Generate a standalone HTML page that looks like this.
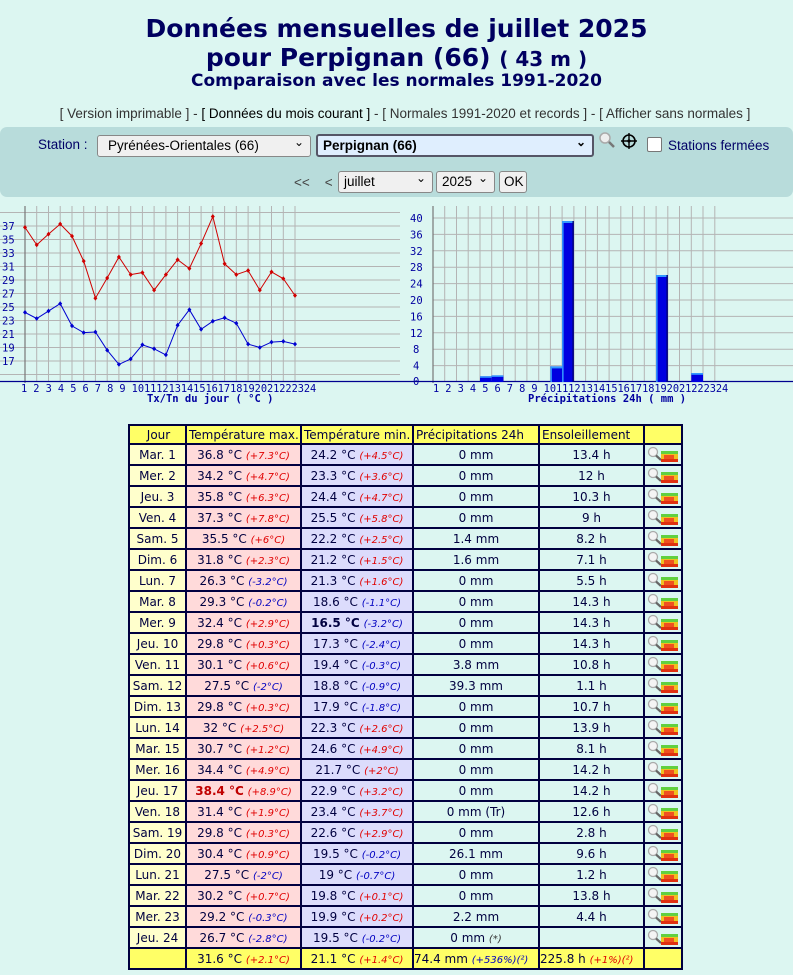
<!DOCTYPE html>
<html><head><meta charset="utf-8"><style>
body{margin:0;background:#dcf6f1;font-family:"DejaVu Sans","Liberation Sans",sans-serif;color:#000050;width:793px;height:975px;overflow:hidden;position:relative}
.t1{position:absolute;top:14px;left:0;width:793px;text-align:center;font-weight:bold;font-size:25px;line-height:29px;color:#000060}
.t1 small{font-size:20px}
.t2{position:absolute;top:71px;left:0;width:793px;text-align:center;font-weight:bold;font-size:17px;color:#000060}
.links{position:absolute;top:106px;left:0;width:810px;text-align:center;font-family:"Liberation Sans",sans-serif;font-size:13.5px;color:#333}
.links b{font-weight:normal;color:#000}
.panel{position:absolute;top:127px;left:0;width:793px;height:70px;background:#b8dcdb;border-radius:7px}
.sel{position:absolute;background:#f0f0f0;border:1px solid #888;border-radius:3px;font-family:"Liberation Sans",sans-serif;font-size:13.5px;color:#000;padding-left:10px;box-sizing:border-box;line-height:20px}
.sel.a:after{content:"⌄";position:absolute;right:6px;top:-4px;font-size:12px}
.lbl{position:absolute;font-family:"Liberation Sans",sans-serif;font-size:13.5px;color:#000066}
table{position:absolute;top:424px;left:128px;width:553px;border-collapse:collapse;table-layout:fixed;font-family:"DejaVu Sans",sans-serif;font-size:12px;color:#000040}
td,th{border:2px solid #000040;height:19px;padding:0;text-align:center;white-space:nowrap;overflow:hidden}
th{height:17px;background:#ffff66;font-weight:normal;font-size:12px;text-align:left;padding-left:2px}
th.c{text-align:center}
td.j{background:#ffffcc}
td.x{background:#ffdada}
td.n{background:#dcdcfc}
i{font-size:10px}
i.r{color:#e00000}i.b{color:#0000c0}
tr.tot td{background:#ffff66}
.ic{display:inline-block;vertical-align:middle}
</style></head><body>
<div class="t1">Données mensuelles de juillet 2025<br>pour Perpignan (66) <small>( 43 m )</small></div>
<div class="t2">Comparaison avec les normales 1991-2020</div>
<div class="links">[ Version imprimable ] - <b>[ Données du mois courant ]</b> - [ Normales 1991-2020 et records ] - [ Afficher sans normales ]</div>
<div class="panel"></div>
<div class="lbl" style="left:38px;top:137px">Station :</div>
<div class="sel a" style="left:97px;top:135px;width:214px;height:22px">Pyrénées-Orientales (66)</div>
<div class="sel a" style="left:316px;top:134px;width:278px;height:23px;background:#dfeefe;border:2px solid #556;font-weight:bold;padding-left:5px">Perpignan (66)</div>
<svg style="position:absolute;left:598px;top:131px" width="20" height="20"><circle cx="7" cy="7" r="5" fill="#eee" stroke="#aaa" stroke-width="1.5"/><line x1="11" y1="11" x2="16" y2="16" stroke="#777" stroke-width="2.5"/></svg>
<svg style="position:absolute;left:620px;top:132px" width="20" height="20"><circle cx="9" cy="9" r="6" fill="none" stroke="#000" stroke-width="1.6"/><path d="M9 1V17M1 9H17" stroke="#000" stroke-width="1.4"/><circle cx="9" cy="9" r="1.6"/></svg>
<div style="position:absolute;left:647px;top:137px;width:13px;height:13px;background:#fff;border:1px solid #777;border-radius:2px"></div>
<div class="lbl" style="left:668px;top:138px">Stations fermées</div>
<div class="lbl" style="left:294px;top:175px;color:#444">&lt;&lt;&nbsp;&nbsp;&nbsp; &lt;</div>
<div class="sel a" style="left:338px;top:171px;width:95px;height:22px;padding-left:5px">juillet</div>
<div class="sel a" style="left:436px;top:171px;width:59px;height:22px;padding-left:5px">2025</div>
<div class="sel" style="left:499px;top:171px;width:28px;height:22px;padding-left:4px">OK</div>
<svg style="position:absolute;left:0;top:200px" width="793" height="212" viewBox="0 200 793 212" font-family="DejaVu Sans Mono,monospace" font-size="10.5" fill="#0000a0">
<g stroke="#b4b4b4" stroke-width="1">
<path d="M0 212.5H400M0 226H400M0 239.5H400M0 253H400M0 266.5H400M0 280H400M0 293.5H400M0 307H400M0 320.5H400M0 334H400M0 347.5H400M0 361H400M0 374.5H400"/>
<path d="M36.7 206V382M48.5 206V382M60.2 206V382M72 206V382M83.7 206V382M95.4 206V382M107.2 206V382M118.9 206V382M130.7 206V382M142.4 206V382M154.1 206V382M165.9 206V382M177.6 206V382M189.4 206V382M201.1 206V382M212.8 206V382M224.6 206V382M236.3 206V382M248.1 206V382M259.8 206V382M271.5 206V382M283.3 206V382M295 206V382"/>
<path d="M433 218H793M433 234.4H793M433 250.8H793M433 267.2H793M433 283.6H793M433 300H793M433 316.4H793M433 332.8H793M433 349.2H793M433 365.6H793"/>
<path d="M444.7 206V382M456.5 206V382M468.2 206V382M480 206V382M491.7 206V382M503.4 206V382M515.2 206V382M526.9 206V382M538.7 206V382M550.4 206V382M562.1 206V382M573.9 206V382M585.6 206V382M597.4 206V382M609.1 206V382M620.8 206V382M632.6 206V382M644.3 206V382M656.1 206V382M667.8 206V382M679.5 206V382M691.3 206V382M703 206V382M714.8 206V382"/>
</g>
<path d="M25 206V383M433 206V383" stroke="#777" stroke-width="1.2"/>
<path d="M0 381.5H400M400 381.5H793" stroke="#000090" stroke-width="1.3"/>
<polyline fill="none" stroke="#d00000" stroke-width="1" points="25,227.35 36.74,244.9 48.48,234.1 60.22,224 71.96,236.1 83.7,261.1 95.44,298.2 107.18,278 118.92,257 130.66,274.6 142.4,272.6 154.14,290.1 165.88,274.6 177.62,259.75 189.36,268.5 201.1,243.55 212.84,216.55 224.58,263.8 236.32,274.6 248.06,270.55 259.8,290.1 271.54,271.9 283.28,278.65 295,295.5"/>
<polyline fill="none" stroke="#0000d0" stroke-width="1" points="25,312.4 36.74,318.5 48.48,311.05 60.22,303.6 71.96,325.9 83.7,332.65 95.44,332 107.18,350.2 118.92,364.4 130.66,359 142.4,344.8 154.14,348.85 165.88,354.9 177.62,325.2 189.36,309.7 201.1,329.3 212.84,321.2 224.58,317.8 236.32,323.2 248.06,344.1 259.8,347.5 271.54,342.1 283.28,341.4 295,344.1"/>
<g fill="#d00000"><path d="M25 225l2 2.4-2 2.4-2-2.4zM36.7 242.5l2 2.4-2 2.4-2-2.4zM48.5 231.7l2 2.4-2 2.4-2-2.4zM60.2 221.6l2 2.4-2 2.4-2-2.4zM72 233.7l2 2.4-2 2.4-2-2.4zM83.7 258.7l2 2.4-2 2.4-2-2.4zM95.4 295.8l2 2.4-2 2.4-2-2.4zM107.2 275.6l2 2.4-2 2.4-2-2.4zM118.9 254.6l2 2.4-2 2.4-2-2.4zM130.7 272.2l2 2.4-2 2.4-2-2.4zM142.4 270.2l2 2.4-2 2.4-2-2.4zM154.1 287.7l2 2.4-2 2.4-2-2.4zM165.9 272.2l2 2.4-2 2.4-2-2.4zM177.6 257.3l2 2.4-2 2.4-2-2.4zM189.4 266.1l2 2.4-2 2.4-2-2.4zM201.1 241.1l2 2.4-2 2.4-2-2.4zM212.8 214.1l2 2.4-2 2.4-2-2.4zM224.6 261.4l2 2.4-2 2.4-2-2.4zM236.3 272.2l2 2.4-2 2.4-2-2.4zM248.1 268.1l2 2.4-2 2.4-2-2.4zM259.8 287.7l2 2.4-2 2.4-2-2.4zM271.5 269.5l2 2.4-2 2.4-2-2.4zM283.3 276.2l2 2.4-2 2.4-2-2.4zM295 293.1l2 2.4-2 2.4-2-2.4z"/></g>
<g fill="#0000d0"><path d="M25 310l2 2.4-2 2.4-2-2.4zM36.7 316.1l2 2.4-2 2.4-2-2.4zM48.5 308.6l2 2.4-2 2.4-2-2.4zM60.2 301.2l2 2.4-2 2.4-2-2.4zM72 323.5l2 2.4-2 2.4-2-2.4zM83.7 330.2l2 2.4-2 2.4-2-2.4zM95.4 329.6l2 2.4-2 2.4-2-2.4zM107.2 347.8l2 2.4-2 2.4-2-2.4zM118.9 362l2 2.4-2 2.4-2-2.4zM130.7 356.6l2 2.4-2 2.4-2-2.4zM142.4 342.4l2 2.4-2 2.4-2-2.4zM154.1 346.4l2 2.4-2 2.4-2-2.4zM165.9 352.5l2 2.4-2 2.4-2-2.4zM177.6 322.8l2 2.4-2 2.4-2-2.4zM189.4 307.3l2 2.4-2 2.4-2-2.4zM201.1 326.9l2 2.4-2 2.4-2-2.4zM212.8 318.8l2 2.4-2 2.4-2-2.4zM224.6 315.4l2 2.4-2 2.4-2-2.4zM236.3 320.8l2 2.4-2 2.4-2-2.4zM248.1 341.7l2 2.4-2 2.4-2-2.4zM259.8 345.1l2 2.4-2 2.4-2-2.4zM271.5 339.7l2 2.4-2 2.4-2-2.4zM283.3 339l2 2.4-2 2.4-2-2.4zM295 341.7l2 2.4-2 2.4-2-2.4z"/></g>
<g>
<text x="2" y="230">37</text><text x="2" y="243.5">35</text><text x="2" y="257">33</text><text x="2" y="270.5">31</text><text x="2" y="284">29</text><text x="2" y="297.5">27</text><text x="2" y="311">25</text><text x="2" y="324.5">23</text><text x="2" y="338">21</text><text x="2" y="351.5">19</text><text x="2" y="365">17</text>
<text x="410" y="222">40</text><text x="410" y="238.4">36</text><text x="410" y="254.8">32</text><text x="410" y="271.2">28</text><text x="410" y="287.6">24</text><text x="410" y="304">20</text><text x="410" y="320.4">16</text><text x="410" y="336.8">12</text><text x="413" y="353.2">8</text><text x="413" y="369.6">4</text><text x="413" y="385">0</text>
</g>
<text x="21" y="392" font-size="10.3" letter-spacing="-0.05">1 2 3 4 5 6 7 8 9 101112131415161718192021222324</text>
<text x="433" y="392" font-size="10.3" letter-spacing="-0.05">1 2 3 4 5 6 7 8 9 101112131415161718192021222324</text>
<text x="147" y="402" font-weight="bold" font-size="10.5">Tx/Tn du jour ( °C )</text>
<text x="528" y="402" font-weight="bold" font-size="10.5">Précipitations 24h ( mm )</text>
<g>
<rect x="480" y="376.3" width="11.7" height="5.7" fill="#0000e0"/><rect x="480" y="376.3" width="11.7" height="1.5" fill="#3399ff"/>
<rect x="491.7" y="375.4" width="11.7" height="6.6" fill="#0000e0"/><rect x="491.7" y="375.4" width="11.7" height="1.5" fill="#3399ff"/>
<rect x="550.4" y="366.4" width="11.7" height="15.6" fill="#0000e0"/><rect x="550.4" y="366.4" width="11.7" height="2" fill="#3399ff"/><rect x="550.4" y="366.4" width="1.5" height="15.6" fill="#3399ff"/>
<rect x="562.1" y="221" width="11.7" height="161" fill="#0000e0"/><rect x="562.1" y="221" width="11.7" height="2" fill="#3399ff"/><rect x="562.1" y="221" width="1.5" height="161" fill="#3399ff"/><rect x="572.5" y="221" width="1.3" height="161" fill="#000070"/>
<rect x="656.1" y="275" width="11.7" height="107" fill="#0000e0"/><rect x="656.1" y="275" width="11.7" height="2" fill="#3399ff"/><rect x="656.1" y="275" width="1.5" height="107" fill="#3399ff"/><rect x="666.5" y="275" width="1.3" height="107" fill="#000070"/>
<rect x="691.3" y="373" width="11.7" height="9" fill="#0000e0"/><rect x="691.3" y="373" width="11.7" height="1.8" fill="#3399ff"/>
</g>
</svg>
<table>
<colgroup><col style="width:57px"><col style="width:115px"><col style="width:112px"><col style="width:126px"><col style="width:105px"><col style="width:38px"></colgroup>
<tr><th class="c">Jour</th><th>Température max.</th><th>Température min.</th><th>Précipitations 24h</th><th>Ensoleillement</th><th></th></tr>
<tr><td class="j">Mar. 1</td><td class="x">36.8 °C <i class="r">(+7.3°C)</i></td><td class="n">24.2 °C <i class="r">(+4.5°C)</i></td><td>0 mm</td><td>13.4 h</td><td>ICON</td></tr>
<tr><td class="j">Mer. 2</td><td class="x">34.2 °C <i class="r">(+4.7°C)</i></td><td class="n">23.3 °C <i class="r">(+3.6°C)</i></td><td>0 mm</td><td>12 h</td><td>ICON</td></tr>
<tr><td class="j">Jeu. 3</td><td class="x">35.8 °C <i class="r">(+6.3°C)</i></td><td class="n">24.4 °C <i class="r">(+4.7°C)</i></td><td>0 mm</td><td>10.3 h</td><td>ICON</td></tr>
<tr><td class="j">Ven. 4</td><td class="x">37.3 °C <i class="r">(+7.8°C)</i></td><td class="n">25.5 °C <i class="r">(+5.8°C)</i></td><td>0 mm</td><td>9 h</td><td>ICON</td></tr>
<tr><td class="j">Sam. 5</td><td class="x">35.5 °C <i class="r">(+6°C)</i></td><td class="n">22.2 °C <i class="r">(+2.5°C)</i></td><td>1.4 mm</td><td>8.2 h</td><td>ICON</td></tr>
<tr><td class="j">Dim. 6</td><td class="x">31.8 °C <i class="r">(+2.3°C)</i></td><td class="n">21.2 °C <i class="r">(+1.5°C)</i></td><td>1.6 mm</td><td>7.1 h</td><td>ICON</td></tr>
<tr><td class="j">Lun. 7</td><td class="x">26.3 °C <i class="b">(-3.2°C)</i></td><td class="n">21.3 °C <i class="r">(+1.6°C)</i></td><td>0 mm</td><td>5.5 h</td><td>ICON</td></tr>
<tr><td class="j">Mar. 8</td><td class="x">29.3 °C <i class="b">(-0.2°C)</i></td><td class="n">18.6 °C <i class="b">(-1.1°C)</i></td><td>0 mm</td><td>14.3 h</td><td>ICON</td></tr>
<tr><td class="j">Mer. 9</td><td class="x">32.4 °C <i class="r">(+2.9°C)</i></td><td class="n"><b>16.5 °C</b> <i class="b">(-3.2°C)</i></td><td>0 mm</td><td>14.3 h</td><td>ICON</td></tr>
<tr><td class="j">Jeu. 10</td><td class="x">29.8 °C <i class="r">(+0.3°C)</i></td><td class="n">17.3 °C <i class="b">(-2.4°C)</i></td><td>0 mm</td><td>14.3 h</td><td>ICON</td></tr>
<tr><td class="j">Ven. 11</td><td class="x">30.1 °C <i class="r">(+0.6°C)</i></td><td class="n">19.4 °C <i class="b">(-0.3°C)</i></td><td>3.8 mm</td><td>10.8 h</td><td>ICON</td></tr>
<tr><td class="j">Sam. 12</td><td class="x">27.5 °C <i class="b">(-2°C)</i></td><td class="n">18.8 °C <i class="b">(-0.9°C)</i></td><td>39.3 mm</td><td>1.1 h</td><td>ICON</td></tr>
<tr><td class="j">Dim. 13</td><td class="x">29.8 °C <i class="r">(+0.3°C)</i></td><td class="n">17.9 °C <i class="b">(-1.8°C)</i></td><td>0 mm</td><td>10.7 h</td><td>ICON</td></tr>
<tr><td class="j">Lun. 14</td><td class="x">32 °C <i class="r">(+2.5°C)</i></td><td class="n">22.3 °C <i class="r">(+2.6°C)</i></td><td>0 mm</td><td>13.9 h</td><td>ICON</td></tr>
<tr><td class="j">Mar. 15</td><td class="x">30.7 °C <i class="r">(+1.2°C)</i></td><td class="n">24.6 °C <i class="r">(+4.9°C)</i></td><td>0 mm</td><td>8.1 h</td><td>ICON</td></tr>
<tr><td class="j">Mer. 16</td><td class="x">34.4 °C <i class="r">(+4.9°C)</i></td><td class="n">21.7 °C <i class="r">(+2°C)</i></td><td>0 mm</td><td>14.2 h</td><td>ICON</td></tr>
<tr><td class="j">Jeu. 17</td><td class="x"><b style="color:#c00000">38.4 °C</b> <i class="r">(+8.9°C)</i></td><td class="n">22.9 °C <i class="r">(+3.2°C)</i></td><td>0 mm</td><td>14.2 h</td><td>ICON</td></tr>
<tr><td class="j">Ven. 18</td><td class="x">31.4 °C <i class="r">(+1.9°C)</i></td><td class="n">23.4 °C <i class="r">(+3.7°C)</i></td><td>0 mm (Tr)</td><td>12.6 h</td><td>ICON</td></tr>
<tr><td class="j">Sam. 19</td><td class="x">29.8 °C <i class="r">(+0.3°C)</i></td><td class="n">22.6 °C <i class="r">(+2.9°C)</i></td><td>0 mm</td><td>2.8 h</td><td>ICON</td></tr>
<tr><td class="j">Dim. 20</td><td class="x">30.4 °C <i class="r">(+0.9°C)</i></td><td class="n">19.5 °C <i class="b">(-0.2°C)</i></td><td>26.1 mm</td><td>9.6 h</td><td>ICON</td></tr>
<tr><td class="j">Lun. 21</td><td class="x">27.5 °C <i class="b">(-2°C)</i></td><td class="n">19 °C <i class="b">(-0.7°C)</i></td><td>0 mm</td><td>1.2 h</td><td>ICON</td></tr>
<tr><td class="j">Mar. 22</td><td class="x">30.2 °C <i class="r">(+0.7°C)</i></td><td class="n">19.8 °C <i class="r">(+0.1°C)</i></td><td>0 mm</td><td>13.8 h</td><td>ICON</td></tr>
<tr><td class="j">Mer. 23</td><td class="x">29.2 °C <i class="b">(-0.3°C)</i></td><td class="n">19.9 °C <i class="r">(+0.2°C)</i></td><td>2.2 mm</td><td>4.4 h</td><td>ICON</td></tr>
<tr><td class="j">Jeu. 24</td><td class="x">26.7 °C <i class="b">(-2.8°C)</i></td><td class="n">19.5 °C <i class="b">(-0.2°C)</i></td><td>0 mm <i style="color:#333">(*)</i></td><td></td><td>ICON</td></tr>
<tr class="tot"><td></td><td>31.6 °C <i class="r">(+2.1°C)</i></td><td>21.1 °C <i class="r">(+1.4°C)</i></td><td style="text-align:left">74.4 mm <i class="b">(+536%)(²)</i></td><td style="text-align:left">225.8 h <i class="r">(+1%)(²)</i></td><td></td></tr>
</table>
<script>
var ic='<svg class="ic" width="34" height="18"><circle cx="7" cy="6" r="4.5" fill="#f4f4f4" stroke="#aaa" stroke-width="1.3"/><line x1="10" y1="9.5" x2="15" y2="14" stroke="#666" stroke-width="2.2"/><rect x="15" y="5" width="17" height="11" fill="#f0c020"/><rect x="15" y="5" width="17" height="3" fill="#60d040"/><rect x="18" y="9" width="10" height="4" fill="#f05020"/><rect x="15" y="13" width="17" height="3" fill="#e03010"/></svg>';
document.querySelectorAll('td').forEach(function(t){if(t.textContent=='ICON')t.innerHTML=ic;});
</script>
</body></html>
